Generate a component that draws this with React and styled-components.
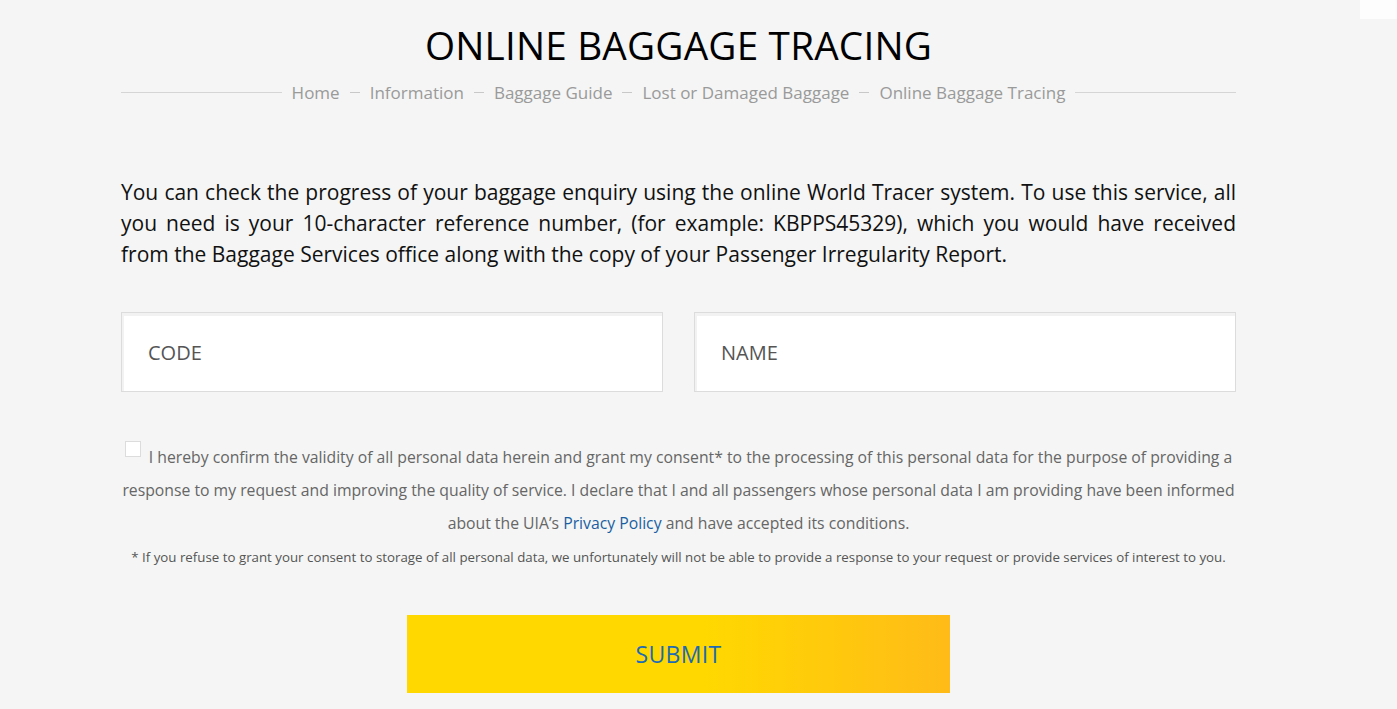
import React from 'react';
import styled, { createGlobalStyle } from 'styled-components';

const GlobalStyle = createGlobalStyle`
  html, body {
    margin: 0;
    padding: 0;
    background: #f4f5f4;
    font-family: "Open Sans", "Noto Sans", sans-serif;
  }
  * { box-sizing: border-box; }
`

const Page = styled.div`
  min-height: 709px;
  padding: 0 161px 0 121px;
  position: relative;
`

const Corner = styled.div`
  position: absolute;
  top: 0;
  right: 0;
  width: 37px;
  height: 19px;
  background: #fcfdfc;
`

const Container = styled.main`
  width: 1115px;
  display: flex;
  flex-direction: column;
`

const Title = styled.h1`
  margin: 22px 0 0;
  font-size: 38.7px;
  line-height: 46px;
  font-weight: 400;
  color: #000;
  text-align: center;
  letter-spacing: 0.2px;
`

const Crumbs = styled.nav`
  display: flex;
  align-items: center;
  margin-top: 13px;
  gap: 10px;
  &::before, &::after {
    content: '';
    flex: 1;
    height: 1px;
    background: #d4d5d4;
  }
`

const Crumb = styled.span`
  font-size: 17px;
  color: #9a9a9a;
`

const Dash = styled.span`
  width: 10px;
  height: 1px;
  background: #c8c8c8;
`

const Intro = styled.p`
  margin: 73px 0 0;
  font-size: 21px;
  line-height: 31px;
  color: #111;
  text-align: justify;
`

const Fields = styled.div`
  display: grid;
  grid-template-columns: 1fr 1fr;
  gap: 31px;
  margin-top: 42px;
`

const Field = styled.input`
  height: 80px;
  border: 1px solid #dcdcdc;
  box-shadow: inset 2px 3px 0 #f2f2f2;
  background: #fff;
  padding: 0 26px;
  font-family: inherit;
  font-size: 20px;
  color: #555;
  outline: none;
  &::placeholder { color: #555; }
`

const Consent = styled.p`
  margin: 49px 0 0;
  font-size: 15.75px;
  line-height: 33px;
  color: #666;
  text-align: center;
`

const Box = styled.span`
  display: inline-block;
  width: 16px;
  height: 16px;
  border: 1px solid #dcdcdc;
  background: #fff;
  vertical-align: 6px;
  margin-right: 8px;
`

const Link = styled.a`
  color: #1a5fa3;
  text-decoration: none;
`

const Note = styled.p`
  margin: 8px 0 0;
  font-size: 13.3px;
  color: #555;
  text-align: center;
`

const Submit = styled.button`
  align-self: center;
  width: 543px;
  height: 78px;
  margin-top: 49px;
  border: none;
  background: linear-gradient(90deg, #ffd800 0%, #ffd800 55%, #ffbb18 100%);
  font-family: inherit;
  font-size: 23px;
  color: #1d6bb5;
  letter-spacing: 0.3px;
`

const crumbs = ['Home', 'Information', 'Baggage Guide', 'Lost or Damaged Baggage', 'Online Baggage Tracing'];

export default function App() {
  return (
    <Page>
      <GlobalStyle />
      <Corner />
      <Container>
        <Title>ONLINE BAGGAGE TRACING</Title>
        <Crumbs>
          {crumbs.map((c, i) => (
            <React.Fragment key={c}>
              {i > 0 && <Dash />}
              <Crumb>{c}</Crumb>
            </React.Fragment>
          ))}
        </Crumbs>
        <Intro>
          You can check the progress of your baggage enquiry using the online World Tracer system. To use this service, all you need is your 10-character reference number, (for example: KBPPS45329), which you would have received from the Baggage Services office along with the copy of your Passenger Irregularity Report.
        </Intro>
        <Fields>
          <Field placeholder="CODE" />
          <Field placeholder="NAME" />
        </Fields>
        <Consent>
          <Box />I hereby confirm the validity of all personal data herein and grant my consent* to the processing of this personal data for the purpose of providing a response to my request and improving the quality of service. I declare that I and all passengers whose personal data I am providing have been informed about the UIA’s <Link href="#">Privacy Policy</Link> and have accepted its conditions.
        </Consent>
        <Note>* If you refuse to grant your consent to storage of all personal data, we unfortunately will not be able to provide a response to your request or provide services of interest to you.</Note>
        <Submit>SUBMIT</Submit>
      </Container>
    </Page>
  );
}
